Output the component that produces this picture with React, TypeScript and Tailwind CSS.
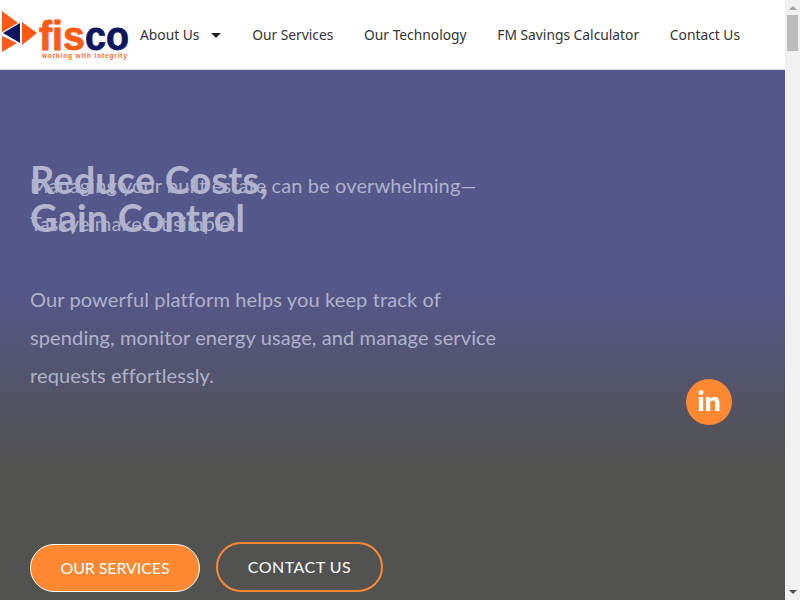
import { FaLinkedinIn } from "react-icons/fa";

const Logo = () => (
  <svg width="130" height="69" viewBox="0 0 130 69" className="shrink-0">
    <polygon points="2,11 18,23 2,32" fill="#ff5a14" />
    <polygon points="2,36 17,43 2,52" fill="#ff5a14" />
    <polygon points="3,33 20,23 20,43" fill="#0b1560" />
    <polygon points="22,22 37,33 22,45" fill="#ff5a14" />
    <text x="39" y="50" fontFamily="'Liberation Sans', sans-serif" fontWeight="700" fontSize="40" stroke="#ff5a14" strokeWidth="0.8" textLength="46" lengthAdjust="spacingAndGlyphs" fill="#ff5a14">fis</text>
    <text x="85" y="50" fontFamily="'Liberation Sans', sans-serif" fontWeight="700" fontSize="40" stroke="#0b1560" strokeWidth="0.8" textLength="44" lengthAdjust="spacingAndGlyphs" fill="#0b1560">co</text>
    <text x="42" y="57.5" fontFamily="'Liberation Sans', sans-serif" fontWeight="700" fontSize="6.5" textLength="85" lengthAdjust="spacing" fill="#ff6a2a">working with integrity</text>
  </svg>
);

const NavLink = ({ label, caret }: { label: string; caret?: boolean }) => (
  <a className="flex items-center text-[13.8px] text-[#333] font-['Noto_Sans',sans-serif]">
    {label}
    {caret && <span className="ml-[12px] h-0 w-0 border-x-[5px] border-t-[5px] border-x-transparent border-t-[#222]" />}
  </a>
);

const Scrollbar = () => (
  <div className="flex w-[15px] shrink-0 flex-col items-center bg-[#f1f1f1]">
    <div className="mt-[6px] h-0 w-0 border-x-[4px] border-b-[4px] border-x-transparent border-b-[#a3a3a3]" />
    <div className="mt-[5px] h-[36px] w-[11px] bg-[#bcbcbc]" />
    <div className="mt-auto mb-[6px] h-0 w-0 border-x-[4px] border-t-[4px] border-x-transparent border-t-[#505050]" />
  </div>
);

export default function App() {
  return (
    <div className="flex h-[600px] w-[800px] overflow-hidden bg-white">
      <div className="flex min-w-0 flex-1 flex-col">
        <header className="flex h-[70px] shrink-0 items-start border-b border-[#d9d9d9] bg-white">
          <Logo />
          <nav className="ml-[10px] flex h-[69px] items-center gap-[30.7px] pt-[1px]">
            <NavLink label="About Us" caret />
            <NavLink label="Our Services" />
            <NavLink label="Our Technology" />
            <NavLink label="FM Savings Calculator" />
            <NavLink label="Contact Us" />
          </nav>
        </header>
        <main className="flex flex-1 flex-col bg-[linear-gradient(180deg,#55568a_0%,#55568a_41%,#525250_75%)] pl-[30px] font-['Lato',sans-serif]">
          <div className="mt-[90px] grid w-[480px]">
            <h1 className="col-start-1 row-start-1 text-[38px] leading-[38px] font-bold text-[#b3b5cf] tracking-[0.1px]">
              Reduce Costs,
              <br />
              Gain Control
            </h1>
            <div className="col-start-1 row-start-1 mt-[6px] text-[20px] leading-[38px] text-[#b0b2cc] tracking-[0.12px]">
              <p>Managing your built estate can be overwhelming—Taskye makes it simple.</p>
              <p className="mt-[38px]">Our powerful platform helps you keep track of spending, monitor energy usage, and manage service requests effortlessly.</p>
            </div>
          </div>
          <div className="flex justify-end pr-[53px]">
            <a className="-mt-[15px] flex h-[46px] w-[46px] items-center justify-center rounded-full bg-[#ff8833]">
              <FaLinkedinIn size={24} className="text-white" />
            </a>
          </div>
          <div className="mt-auto mb-[8px] flex items-end gap-[16px] text-[16px] text-white">
            <a className="flex h-[48px] w-[170px] items-center justify-center rounded-full border border-white bg-[#ff8833] pb-[1px] tracking-[-0.1px]">OUR SERVICES</a>
            <a className="flex h-[50px] w-[167px] items-center justify-center rounded-full border-2 border-[#ff8833] tracking-[0.5px]">CONTACT US</a>
          </div>
        </main>
      </div>
      <Scrollbar />
    </div>
  );
}
